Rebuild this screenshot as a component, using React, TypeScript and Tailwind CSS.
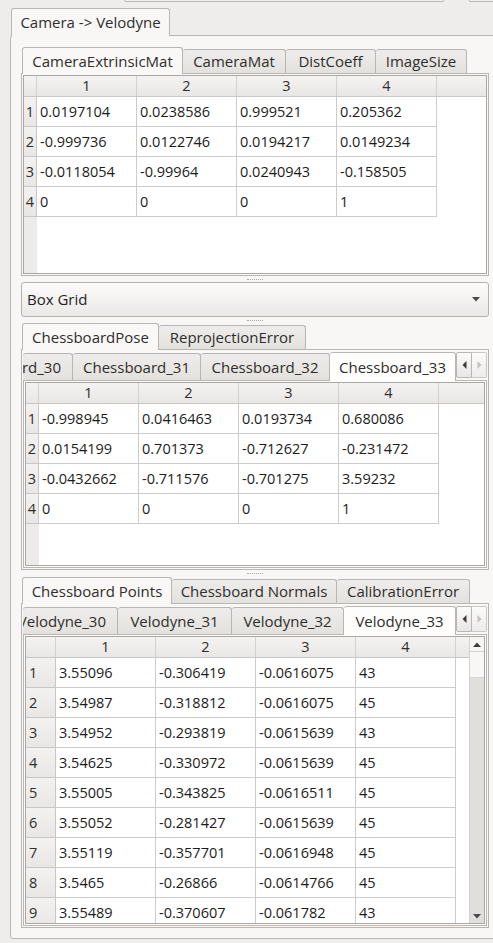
import React from "react";

type Tab = { label: string; w: string; selected?: boolean; cut?: boolean };

function TabBar({ tabs, nested }: { tabs: Tab[]; nested?: boolean }) {
  return (
    <div className={`${nested ? "h-[29px]" : "h-[26px] ml-[1px]"} flex items-end shrink-0 text-[15px]`}>
      {tabs.map((t, i) => {
        const base = `${t.w} shrink-0 flex items-center border-t border-r border-[#b9b5b1] rounded-t-[3px] text-[#2f2e2b] whitespace-nowrap overflow-hidden`;
        const left = i === 0 && !t.cut ? " border-l" : "";
        if (t.selected) {
          return (
            <div
              key={i}
              className={`${base}${left} ${nested ? "h-[29px] bg-[#fdfdfc]" : "h-[27px] bg-[#f9f8f7]"} -mb-px relative z-10 justify-center`}
            >
              {t.label}
            </div>
          );
        }
        return (
          <div
            key={i}
            className={`${base}${left} ${nested ? "h-[27px]" : "h-[24px]"} bg-gradient-to-b from-[#efedeb] to-[#e3e1de] ${t.cut ? "justify-end pr-[11px]" : "justify-center"}`}
          >
            {t.label}
          </div>
        );
      })}
      {nested && (
        <div className="w-[31px] h-[26px] flex self-start mt-[1px] shrink-0">
          <div className="w-[16px] h-full border border-[#b9b5b1] rounded-l-[2px] bg-gradient-to-b from-[#fbfbfa] to-[#e9e7e5] flex items-center justify-center">
            <svg width="5" height="8" viewBox="0 0 5 8">
              <polygon points="4.5,0 0.5,4 4.5,8" fill="#3a3a3a" />
            </svg>
          </div>
          <div className="w-[15px] h-full border border-l-0 border-[#c9c6c3] rounded-r-[2px] bg-gradient-to-b from-[#fbfbfa] to-[#eeecea] flex items-center justify-center">
            <svg width="5" height="8" viewBox="0 0 5 8">
              <polygon points="0.5,0 4.5,4 0.5,8" fill="#c4c1be" />
            </svg>
          </div>
        </div>
      )}
    </div>
  );
}

function Table({
  rhw,
  rows,
  leftNums,
  scrollbar,
}: {
  rhw: string;
  rows: string[][];
  leftNums?: boolean;
  scrollbar?: boolean;
}) {
  return (
    <div className="flex-1 min-h-0 border border-[#aaa6a2] bg-white flex overflow-hidden">
      <div className="flex-1 flex flex-col min-w-0">
        <div className="flex h-[21px] shrink-0 bg-gradient-to-b from-[#f4f3f2] to-[#e9e7e5] border-b border-[#c9c6c3] text-[#2f2e2b]">
          <div className={`${rhw} shrink-0 border-r border-[#d3d0cd]`} />
          {["1", "2", "3", "4"].map((h) => (
            <div key={h} className="w-[100px] shrink-0 border-r border-[#d3d0cd] flex items-center justify-center">
              {h}
            </div>
          ))}
          <div className="flex-1" />
        </div>
        <div className="flex-1 flex min-h-0">
          <div className={`${rhw} shrink-0 bg-[#edebe9] flex flex-col`}>
            {rows.map((_, i) => (
              <div
                key={i}
                className={`h-[30px] shrink-0 border-b border-r border-[#c9c6c3] bg-gradient-to-b from-[#f3f2f1] to-[#e9e7e5] flex items-center text-[#2f2e2b] ${leftNums ? "pl-[3px]" : "justify-center"}`}
              >
                {i + 1}
              </div>
            ))}
          </div>
          <div className="flex flex-col">
            {rows.map((r, i) => (
              <div key={i} className="flex h-[30px] shrink-0 border-b border-[#cccccc]">
                {r.map((c, j) => (
                  <div key={j} className="w-[100px] shrink-0 border-r border-[#cccccc] pl-[3px] flex items-center text-[#1c1c1c]">
                    {c}
                  </div>
                ))}
              </div>
            ))}
          </div>
        </div>
      </div>
      {scrollbar && (
        <div className="w-[15px] shrink-0 flex flex-col border-l border-[#d4d2cf] bg-[#e1dfdc]">
          <div className="h-[14px] shrink-0 bg-[#f6f5f4] flex items-center justify-center">
            <svg width="8" height="5" viewBox="0 0 8 5">
              <polygon points="0,5 4,0.5 8,5" fill="#3c3c3c" />
            </svg>
          </div>
          <div className="h-[27px] shrink-0 bg-[#f8f7f6] border-y border-[#d6d4d1]" />
          <div className="flex-1" />
          <div className="h-[14px] shrink-0 bg-[#e1dfdc] flex items-center justify-center">
            <svg width="8" height="5" viewBox="0 0 8 5">
              <polygon points="0,0 4,4.5 8,0" fill="#4a4a4a" />
            </svg>
          </div>
        </div>
      )}
    </div>
  );
}

function Splitter({ h }: { h: string }) {
  return (
    <div className={`${h} shrink-0 w-[468px] flex items-center justify-center`}>
      <div className="w-[16px] border-t border-dotted border-[#aba7a3]" />
    </div>
  );
}

const t1 = [
  ["0.0197104", "0.0238586", "0.999521", "0.205362"],
  ["-0.999736", "0.0122746", "0.0194217", "0.0149234"],
  ["-0.0118054", "-0.99964", "0.0240943", "-0.158505"],
  ["0", "0", "0", "1"],
];
const t2 = [
  ["-0.998945", "0.0416463", "0.0193734", "0.680086"],
  ["0.0154199", "0.701373", "-0.712627", "-0.231472"],
  ["-0.0432662", "-0.711576", "-0.701275", "3.59232"],
  ["0", "0", "0", "1"],
];
const t3 = [
  ["3.55096", "-0.306419", "-0.0616075", "43"],
  ["3.54987", "-0.318812", "-0.0616075", "45"],
  ["3.54952", "-0.293819", "-0.0615639", "43"],
  ["3.54625", "-0.330972", "-0.0615639", "45"],
  ["3.55005", "-0.343825", "-0.0616511", "45"],
  ["3.55052", "-0.281427", "-0.0615639", "45"],
  ["3.55119", "-0.357701", "-0.0616948", "45"],
  ["3.5465", "-0.26866", "-0.0614766", "45"],
  ["3.55489", "-0.370607", "-0.061782", "43"],
];

export default function App() {
  return (
    <div className="w-[493px] h-[943px] overflow-hidden bg-[#efedeb] flex flex-col text-[14.5px] leading-normal font-['Open_Sans','Noto_Sans',sans-serif] text-[#2f2e2b]">
      {/* fragments of widgets above */}
      <div className="h-[8px] shrink-0 flex items-start">
        <div className="ml-[124px] w-[320px] h-[2px] border-b border-x border-[#bdb9b5] rounded-b-[3px]" />
        <div className="ml-[25px] flex-1 h-[2px] border-b border-l border-[#bdb9b5] rounded-bl-[3px]" />
      </div>
      {/* outer tab */}
      <div className="h-[27px] shrink-0 flex items-end pl-[11px] text-[15px]">
        <div className="w-[159px] h-[28px] -mb-px relative z-10 border-x border-t border-[#b9b5b1] rounded-t-[3px] bg-[#f8f7f6] flex items-center justify-center whitespace-nowrap">
          Camera -&gt; Velodyne
        </div>
      </div>
      {/* outer pane */}
      <div className="ml-[10px] w-[500px] h-[904px] shrink-0 border border-[#b9b5b1] rounded-[3px] bg-[#f8f7f6] pl-[10px] pt-[11px] pb-[10px] flex flex-col">
        {/* widget 1 */}
        <div className="w-[468px] flex flex-col shrink-0">
          <TabBar
            tabs={[
              { label: "CameraExtrinsicMat", w: "w-[161px]", selected: true },
              { label: "CameraMat", w: "w-[103px]" },
              { label: "DistCoeff", w: "w-[90px]" },
              { label: "ImageSize", w: "w-[91px]" },
            ]}
          />
          <div className="h-[203px] border border-[#b9b5b1] bg-[#f9f8f7] p-[1px] flex flex-col">
            <Table rhw="w-[13px]" rows={t1} />
          </div>
        </div>
        <Splitter h="h-[6px]" />
        {/* combobox */}
        <div className="w-[468px] h-[35px] shrink-0 border border-[#b5b1ad] rounded-[3px] bg-gradient-to-b from-[#fcfbfb] to-[#ebe9e6] flex items-center pl-[5px] pr-[8px] text-[#1f1f1f] text-[15px]">
          <span className="flex-1">Box Grid</span>
          <svg width="8" height="5" viewBox="0 0 8 5">
            <polygon points="0,0 4,4.5 8,0" fill="#4a4a4a" />
          </svg>
        </div>
        <Splitter h="h-[6px]" />
        {/* widget 2 */}
        <div className="w-[468px] flex flex-col shrink-0">
          <TabBar
            tabs={[
              { label: "ChessboardPose", w: "w-[137px]", selected: true },
              { label: "ReprojectionError", w: "w-[147px]" },
            ]}
          />
          <div className="h-[221px] border border-[#b9b5b1] bg-[#f9f8f7] p-[1px] flex flex-col">
            <TabBar
              nested
              tabs={[
                { label: "Chessboard_30", w: "w-[50px]", cut: true },
                { label: "Chessboard_31", w: "w-[128px]" },
                { label: "Chessboard_32", w: "w-[129px]" },
                { label: "Chessboard_33", w: "w-[126px]", selected: true },
              ]}
            />
            <div className="flex-1 min-h-0 border border-[#b9b5b1] bg-[#fdfdfc] p-[1px] flex flex-col">
              <Table rhw="w-[13px]" rows={t2} />
            </div>
          </div>
        </div>
        <Splitter h="h-[7px]" />
        {/* widget 3 */}
        <div className="w-[468px] flex flex-col shrink-0">
          <TabBar
            tabs={[
              { label: "Chessboard Points", w: "w-[150px]", selected: true },
              { label: "Chessboard Normals", w: "w-[165px]" },
              { label: "CalibrationError", w: "w-[133px]" },
            ]}
          />
          <div className="h-[325px] border border-[#b9b5b1] bg-[#f9f8f7] p-[1px] flex flex-col">
            <TabBar
              nested
              tabs={[
                { label: "Velodyne_30", w: "w-[95px]", cut: true },
                { label: "Velodyne_31", w: "w-[114px]" },
                { label: "Velodyne_32", w: "w-[112px]" },
                { label: "Velodyne_33", w: "w-[112px]", selected: true },
              ]}
            />
            <div className="flex-1 min-h-0 border border-[#b9b5b1] bg-[#fdfdfc] p-[1px] flex flex-col">
              <Table rhw="w-[30px]" rows={t3} leftNums scrollbar />
            </div>
          </div>
        </div>
      </div>
    </div>
  );
}
